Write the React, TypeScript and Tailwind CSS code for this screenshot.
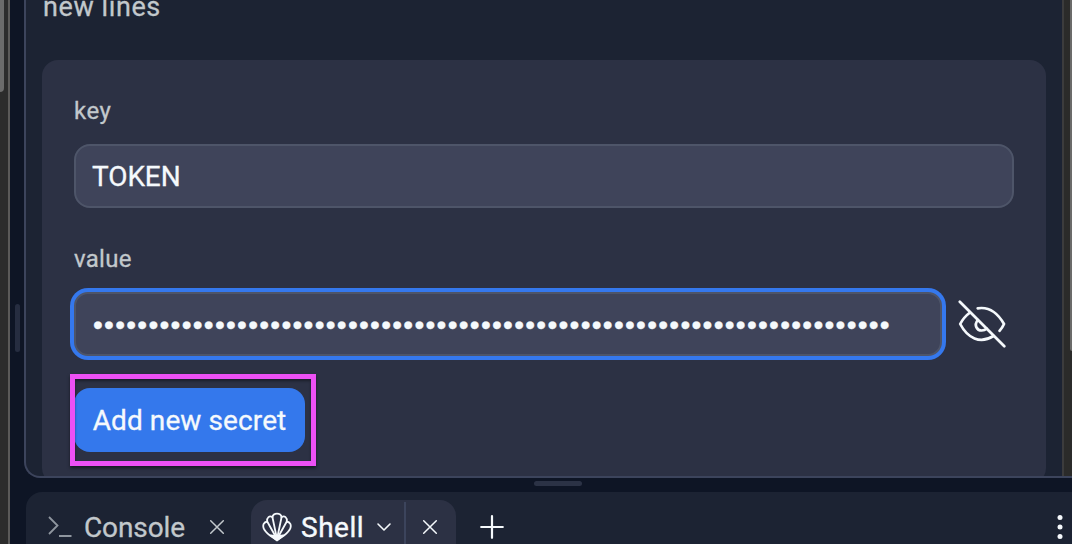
import React from "react";

const font = "font-['Roboto','Liberation_Sans',sans-serif]";

function EyeOff() {
  return (
    <svg className="block h-12 w-12 shrink-0" viewBox="0 0 48 48" fill="none" stroke="#f5f9fc" strokeWidth="2.7" strokeLinecap="round" strokeLinejoin="round">
      <path d="M1.8 1.8 L46.3 46.3" />
      <path d="M19.7 8.3 C32 6.3 40 13.5 46 24 C45 26.5 43.5 28.5 41.5 30.8" />
      <path d="M12 12.5 C8 15.5 4.5 19.5 2.2 24 C9.5 38 22 44.5 35.5 36" />
      <path d="M19.8 20 C15.7 25 18.7 30.5 23.7 30.5 C25.7 30.5 27.5 29.8 28.8 28.6" />
    </svg>
  );
}

function Shell() {
  return (
    <svg className="block h-[30px] w-[30px] shrink-0" viewBox="0 0 30 30" fill="none" stroke="#f5f9fc" strokeWidth="1.8" strokeLinejoin="round" strokeLinecap="round">
      <path d="M15 27 L10.5 5.5 C10.5 .2 19.5 .2 19.5 5.5 Z" />
      <path d="M10.5 5.2 C7.5 3.2 4.5 5.5 5.2 9.5 L15 27" />
      <path d="M19.5 5.2 C22.5 3.2 25.5 5.5 24.8 9.5 L15 27" />
      <path d="M5.2 9.5 C1.7 10 .5 13.2 1.7 16.4 C3 19.5 5.5 21.5 8 23.5 L15 28.3 L22 23.5 C24.5 21.5 27 19.5 28.3 16.4 C29.5 13.2 28.3 10 24.8 9.5" />
      <path d="M8.5 23.3 L15 24.2 L21.5 23.3 L15 28.3 Z" fill="#f5f9fc" />
    </svg>
  );
}

function Close({ color }: { color: string }) {
  return (
    <svg className="block h-4 w-4 shrink-0" viewBox="0 0 16 16" fill="none" stroke={color} strokeWidth="1.5" strokeLinecap="round">
      <path d="M1.7 1.7 L14.3 14.3 M14.3 1.7 L1.7 14.3" />
    </svg>
  );
}

function SecretForm() {
  return (
    <div className="mt-[36px] ml-4 h-[424px] w-[1004px] shrink-0 rounded-2xl bg-[#2c3144] px-8 pt-[34px]">
      <div className="h-[34px] text-[24px] leading-[34px] tracking-[0.5px] text-[#c2c8cc]">key</div>
      <div className="mt-4 flex h-16 items-center rounded-2xl border-2 border-[#4e5569] bg-[#3f445a] px-4 pt-0.5 text-[28px] tracking-[-0.1px] text-[#f5f9fc]">
        TOKEN
      </div>
      <div className="mt-[34px] h-[34px] text-[24px] leading-[34px] tracking-[0.3px] text-[#c2c8cc]">value</div>
      <div className="mt-4 flex items-center gap-4">
        <div className="flex h-16 w-[868px] shrink-0 items-center overflow-hidden rounded-[14px] border-2 border-[#4e5569] bg-[#3f445a] pt-0.5 pl-[17px] font-['Liberation_Sans',sans-serif] text-[28px] whitespace-nowrap tracking-[1.28px] text-[#f5f9fc] ring-4 ring-[#3578ed]">
          {"•".repeat(72)}
        </div>
        <EyeOff />
      </div>
      <div className="relative mt-8 flex h-16 w-[231px] items-center justify-center rounded-2xl bg-[#3478ec] pt-0.5 text-[28px] tracking-[0.1px] whitespace-nowrap text-[#f5f9fc]">
        Add new secret
        <div className="absolute -top-[14px] -left-[4px] h-[92px] w-[246px] border-[5px] border-[#ed50f5] shadow-[0_2px_3px_rgba(0,0,0,0.5),inset_0_2px_3px_rgba(0,0,0,0.4)]" />
      </div>
    </div>
  );
}

function TabBar() {
  return (
    <div className="ml-0.5 flex h-[52px] shrink-0 rounded-tl-2xl bg-[#1c2333] pt-2">
      <div className="flex h-[54px] w-[225px] shrink-0 items-center pl-[22px] text-[28px] text-[#c2c8cc]">
        <svg className="block h-6 w-6 shrink-0" viewBox="0 0 24 24" fill="none" stroke="#8f969f" strokeWidth="1.8">
          <path d="M1 2 L9.5 10.5 L1 19 M11 21 H23.5" />
        </svg>
        <span className="ml-3 w-[100px] pt-0.5 tracking-[-0.1px]">Console</span>
        <span className="ml-[25px]"><Close color="#c2c8cc" /></span>
      </div>
      <div className="flex h-[54px] w-[205px] shrink-0 items-center rounded-t-2xl bg-[#2c3144] pl-[11px] text-[28px] text-[#f5f9fc] [-webkit-text-stroke:0.4px_#f5f9fc]">
        <Shell />
        <span className="ml-[9px] w-[64px] pt-0.5 tracking-[0.5px]">Shell</span>
        <svg className="ml-[11px] block h-4 w-4 shrink-0" viewBox="0 0 16 16" fill="none" stroke="#f5f9fc" strokeWidth="1.6" strokeLinecap="round" strokeLinejoin="round">
          <path d="M2 5 L8 11 L14 5" />
        </svg>
        <span className="mt-0.5 ml-3 h-[52px] w-0.5 bg-[#3c445c]" />
        <span className="ml-4"><Close color="#f5f9fc" /></span>
      </div>
      <svg className="mt-[15px] ml-6 block h-6 w-6 shrink-0" viewBox="0 0 24 24" stroke="#f5f9fc" strokeWidth="2.2" strokeLinecap="round">
        <path d="M12 1.2 V22.8 M1.2 12 H22.8" />
      </svg>
      <svg className="mt-[14px] mr-2 ml-auto block h-[26px] w-2 shrink-0" viewBox="0 0 8 26" fill="#f5f9fc">
        <circle cx="4" cy="3.6" r="2.5" />
        <circle cx="4" cy="13" r="2.5" />
        <circle cx="4" cy="22.4" r="2.5" />
      </svg>
    </div>
  );
}

export default function App() {
  return (
    <div className={`flex h-[544px] w-[1072px] overflow-hidden bg-[#0e1525] ${font} [-webkit-text-stroke:0.3px]`}>
      <div className="w-2.5 shrink-0 border-r-2 border-[#5b5a59] bg-[#2c2c2c]">
        <div className="h-[92px] w-1 rounded-br-[4px] bg-[#6b6b6b]" />
      </div>
      <div className="flex w-3.5 shrink-0 pt-[304px] pl-[5px]">
        <div className="h-12 w-[5px] rounded-full bg-[#262d40]" />
      </div>
      <div className="flex min-w-0 flex-1 flex-col">
        <div className="flex h-[478px] shrink-0 overflow-hidden rounded-bl-2xl border-b-2 border-l-2 border-[#3c445c] bg-[#1c2333]">
          <div className="flex w-[1036px] shrink-0 flex-col">
            <div className="-mt-[10px] h-[34px] shrink-0 pl-[17px] text-[27px] leading-[35px] tracking-[0.6px] text-[#c2c8cc]">new lines</div>
            <SecretForm />
          </div>
          <div className="flex w-2.5 shrink-0 justify-end border-l-2 border-[#3c3c3d] bg-[#2b2b2a]">
            <div className="h-[351px] w-0.5 rounded-bl-[2px] bg-[#6b6b6a]" />
          </div>
        </div>
        <div className="flex h-3.5 shrink-0 pt-[3px] pl-[510px]">
          <div className="h-[5px] w-12 rounded-full bg-[#2b3245]" />
        </div>
        <TabBar />
      </div>
    </div>
  );
}
